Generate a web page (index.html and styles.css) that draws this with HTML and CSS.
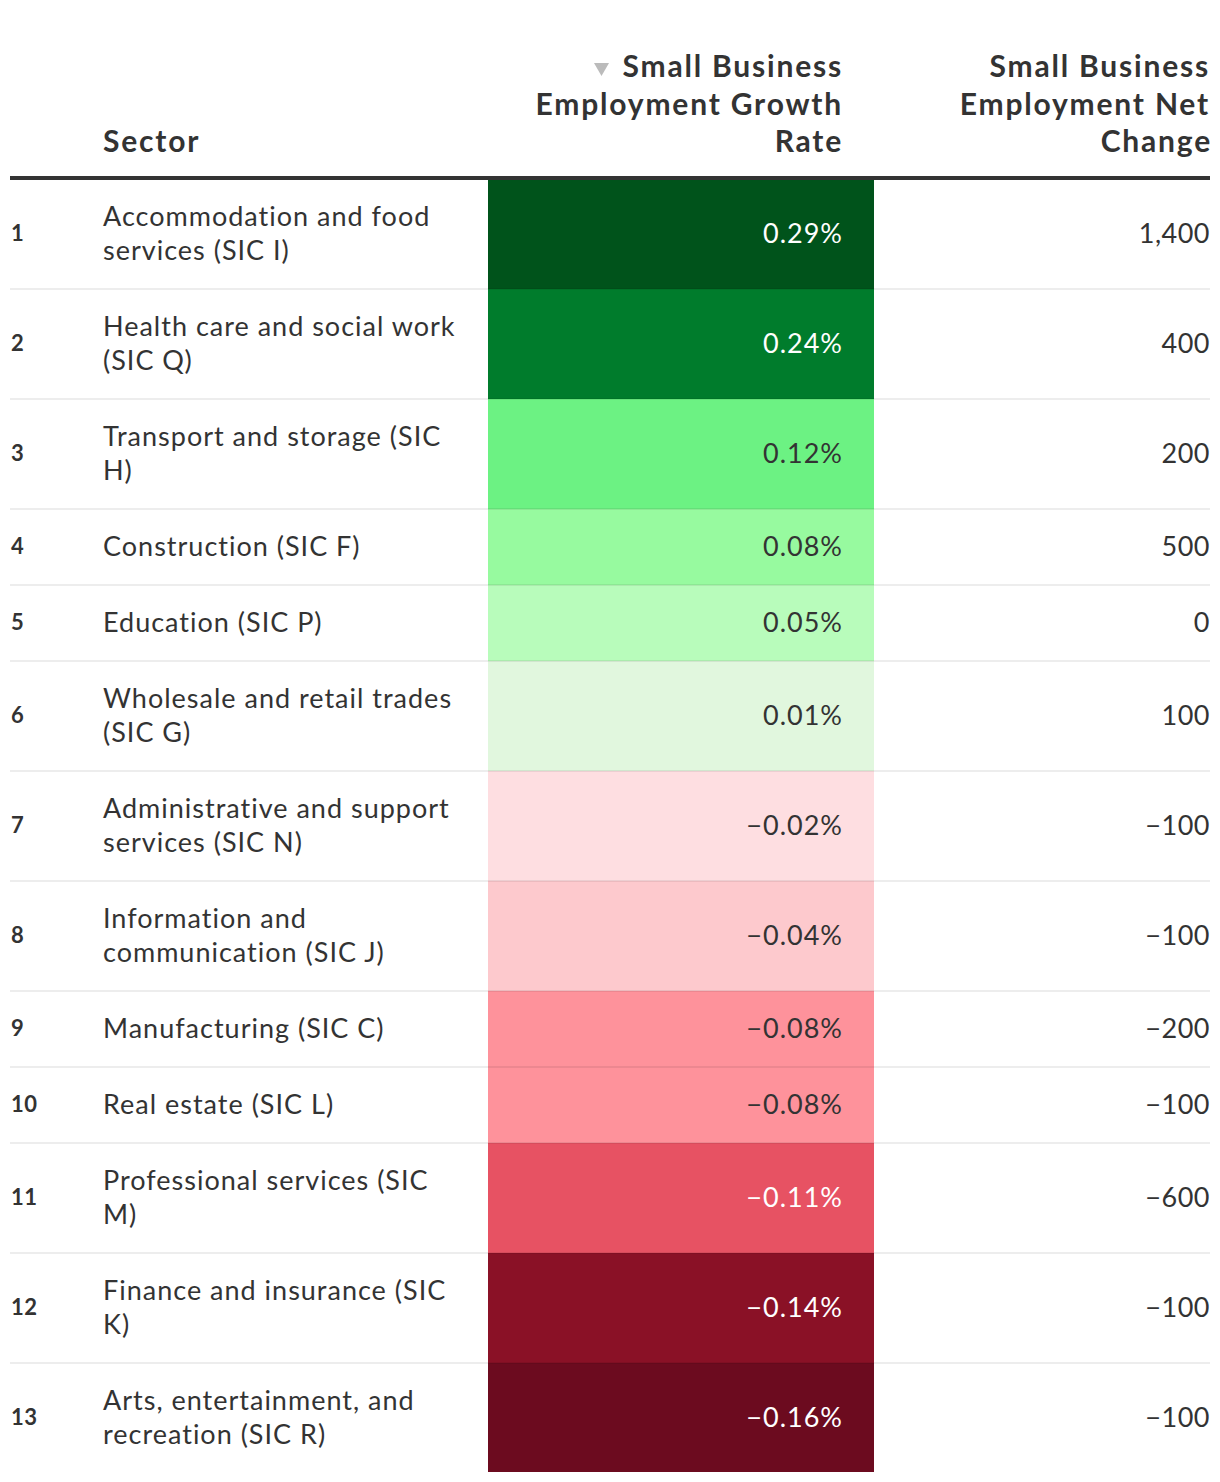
FILE: index.html
```html
<!DOCTYPE html>
<html lang="en">
<head>
<meta charset="utf-8">
<title>Small Business Employment by Sector</title>
<link rel="stylesheet" href="styles.css">
</head>
<body>
<div class="wrap">
<table class="dw-table">
  <colgroup>
    <col class="c-rank">
    <col class="c-sector">
    <col class="c-rate">
    <col class="c-net">
  </colgroup>
  <thead>
    <tr>
      <th class="rank"></th>
      <th class="sector">Sector</th>
      <th class="num heat-h"><svg class="sort" width="15" height="13" viewBox="0 0 15 13" aria-hidden="true"><polygon points="0,0 15,0 7.5,13" fill="#bbbbbb"/></svg>Small Business Employment Growth Rate</th>
      <th class="num net"><span class="hd-end">Small Business Employment Net Change</span></th>
    </tr>
  </thead>
  <tbody>
    <tr><td class="rank">1</td><td class="sector">Accommodation and food services (SIC I)</td><td class="num heat h1 light">0.29%</td><td class="num net">1,400</td></tr>
    <tr><td class="rank">2</td><td class="sector">Health care and social work (SIC Q)</td><td class="num heat h2 light">0.24%</td><td class="num net">400</td></tr>
    <tr><td class="rank">3</td><td class="sector">Transport and storage (SIC H)</td><td class="num heat h3">0.12%</td><td class="num net">200</td></tr>
    <tr><td class="rank">4</td><td class="sector">Construction (SIC F)</td><td class="num heat h4">0.08%</td><td class="num net">500</td></tr>
    <tr><td class="rank">5</td><td class="sector">Education (SIC P)</td><td class="num heat h5">0.05%</td><td class="num net">0</td></tr>
    <tr><td class="rank">6</td><td class="sector">Wholesale and retail trades (SIC G)</td><td class="num heat h6">0.01%</td><td class="num net">100</td></tr>
    <tr><td class="rank">7</td><td class="sector">Administrative and support services (SIC N)</td><td class="num heat h7">&minus;0.02%</td><td class="num net">&minus;100</td></tr>
    <tr><td class="rank">8</td><td class="sector">Information and communication (SIC J)</td><td class="num heat h8">&minus;0.04%</td><td class="num net">&minus;100</td></tr>
    <tr><td class="rank">9</td><td class="sector">Manufacturing (SIC C)</td><td class="num heat h9">&minus;0.08%</td><td class="num net">&minus;200</td></tr>
    <tr><td class="rank">10</td><td class="sector">Real estate (SIC L)</td><td class="num heat h9">&minus;0.08%</td><td class="num net">&minus;100</td></tr>
    <tr><td class="rank">11</td><td class="sector">Professional services (SIC M)</td><td class="num heat h11 light">&minus;0.11%</td><td class="num net">&minus;600</td></tr>
    <tr><td class="rank">12</td><td class="sector">Finance and insurance (SIC K)</td><td class="num heat h12 light">&minus;0.14%</td><td class="num net">&minus;100</td></tr>
    <tr class="last"><td class="rank">13</td><td class="sector">Arts, entertainment, and recreation (SIC R)</td><td class="num heat h13 light">&minus;0.16%</td><td class="num net">&minus;100</td></tr>
  </tbody>
</table>
</div>
</body>
</html>
```
FILE: styles.css
```css
html, body {
  margin: 0;
  padding: 0;
  background: #ffffff;
}

.wrap {
  padding: 47px 10px 10px 10px;
}

.dw-table {
  width: 1200px;
  border-collapse: collapse;
  table-layout: fixed;
  font-family: Lato, "Liberation Sans", sans-serif;
  color: #333333;
}

.c-rank { width: 93px; }
.c-sector { width: 385px; }
.c-rate { width: 386px; }
.c-net { width: 336px; }

.dw-table th {
  font-size: 30px;
  line-height: 37.5px;
  font-weight: 700;
  letter-spacing: 1.8px;
  vertical-align: bottom;
  padding: 0 0 16px 0;
  border-bottom: 4px solid #333333;
  text-align: left;
}

.dw-table th.num {
  text-align: right;
}

.dw-table th.heat-h {
  padding-right: 31px;
  padding-left: 40px;
}

.dw-table th.net {
  padding-left: 30px;
}

.hd-end {
  margin-right: -2px;
}

.sort {
  display: inline-block;
  vertical-align: 1px;
  margin-right: 14px;
}

.dw-table td {
  font-size: 27px;
  line-height: 34px;
  letter-spacing: 1px;
  padding: 19px 0 21px 0;
  border-bottom: 2px solid rgba(0, 0, 0, 0.07);
  vertical-align: middle;
}

.dw-table tr.last td {
  border-bottom: none;
}

.dw-table td.rank {
  font-size: 22px;
  font-weight: 700;
  letter-spacing: 0.5px;
  padding-left: 1px;
}

.dw-table td.sector {
  padding-right: 26px;
}

.dw-table td.num {
  text-align: right;
}

.dw-table td.net {
  letter-spacing: 0.5px;
}

.dw-table td.heat {
  padding-right: 31px;
}

.light { color: #ffffff; }

.h1 { background: #00531b; }
.h2 { background: #007c2c; }
.h3 { background: #6cf283; }
.h4 { background: #97fa9f; }
.h5 { background: #b8fcbb; }
.h6 { background: #e1f7de; }
.h7 { background: #fedee1; }
.h8 { background: #fdc9cd; }
.h9 { background: #fe929b; }
.h11 { background: #e75263; }
.h12 { background: #8a1126; }
.h13 { background: #6c0b1f; }
```
